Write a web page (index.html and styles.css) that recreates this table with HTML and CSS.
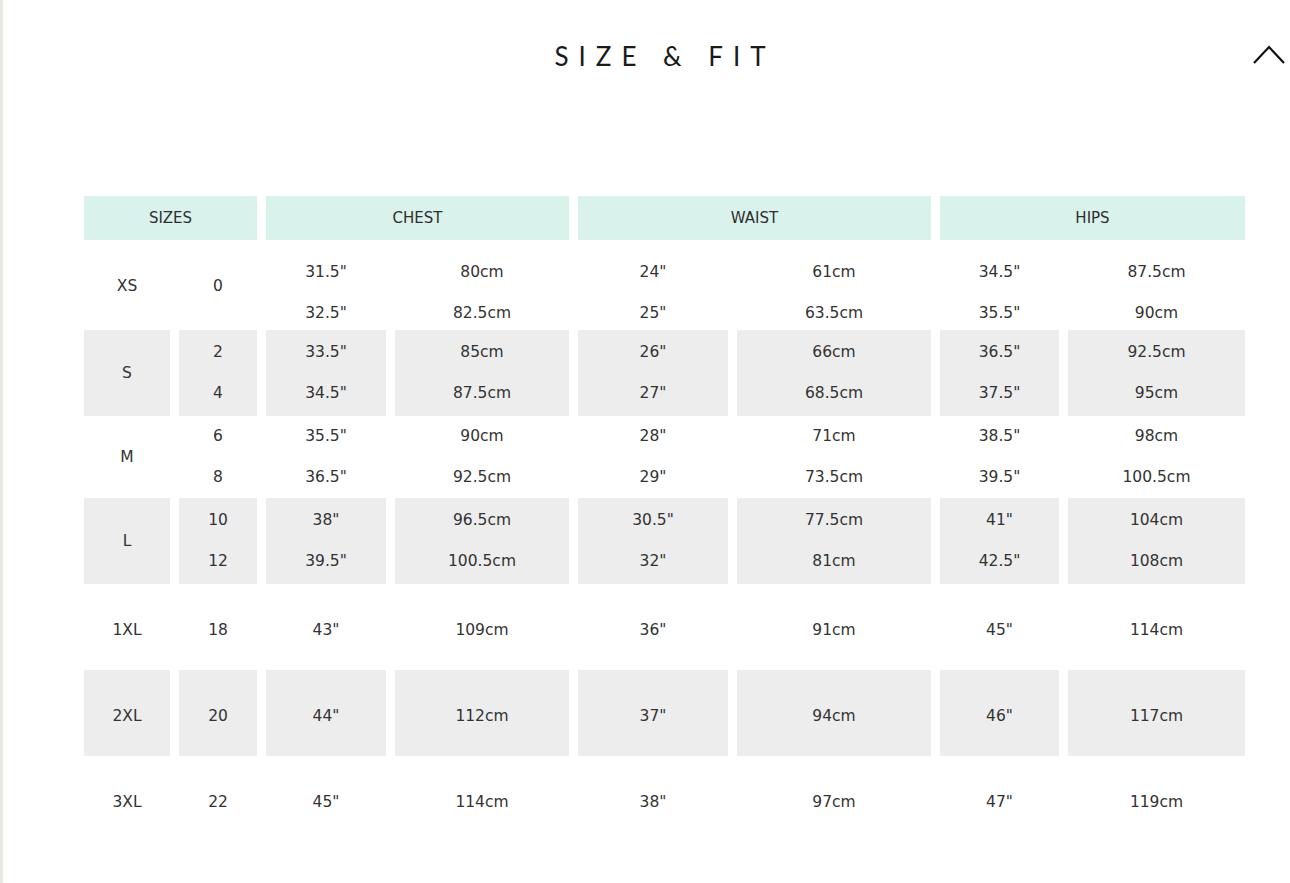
FILE: index.html
```html
<!DOCTYPE html>
<html lang="en">
<head>
<meta charset="utf-8">
<title>Size &amp; Fit</title>
<link rel="stylesheet" href="styles.css">
</head>
<body>
<div class="page">
  <header class="bar">
    <span></span>
    <h1 class="title">SIZE &amp; FIT</h1>
    <svg class="chev" width="35" height="20" viewBox="0 0 35 20" aria-hidden="true"><polyline points="2,18 17,2 32,18" fill="none" stroke="#111" stroke-width="2.2"/></svg>
  </header>

  <div class="chart">
    <div class="row head">
      <div class="hcell span2">SIZES</div>
      <div class="hcell span2">CHEST</div>
      <div class="hcell span2">WAIST</div>
      <div class="hcell span2">HIPS</div>
    </div>

    <div class="row r86 first">
      <div class="cell label">XS</div>
      <div class="cell label">0</div>
      <div class="cell"><span>31.5"</span><span>32.5"</span></div>
      <div class="cell"><span>80cm</span><span>82.5cm</span></div>
      <div class="cell"><span>24"</span><span>25"</span></div>
      <div class="cell"><span>61cm</span><span>63.5cm</span></div>
      <div class="cell"><span>34.5"</span><span>35.5"</span></div>
      <div class="cell"><span>87.5cm</span><span>90cm</span></div>
    </div>

    <div class="row r86 shaded">
      <div class="cell">S</div>
      <div class="cell"><span>2</span><span>4</span></div>
      <div class="cell"><span>33.5"</span><span>34.5"</span></div>
      <div class="cell"><span>85cm</span><span>87.5cm</span></div>
      <div class="cell"><span>26"</span><span>27"</span></div>
      <div class="cell"><span>66cm</span><span>68.5cm</span></div>
      <div class="cell"><span>36.5"</span><span>37.5"</span></div>
      <div class="cell"><span>92.5cm</span><span>95cm</span></div>
    </div>

    <div class="row r82">
      <div class="cell">M</div>
      <div class="cell"><span>6</span><span>8</span></div>
      <div class="cell"><span>35.5"</span><span>36.5"</span></div>
      <div class="cell"><span>90cm</span><span>92.5cm</span></div>
      <div class="cell"><span>28"</span><span>29"</span></div>
      <div class="cell"><span>71cm</span><span>73.5cm</span></div>
      <div class="cell"><span>38.5"</span><span>39.5"</span></div>
      <div class="cell"><span>98cm</span><span>100.5cm</span></div>
    </div>

    <div class="row r86 shaded">
      <div class="cell">L</div>
      <div class="cell"><span>10</span><span>12</span></div>
      <div class="cell"><span>38"</span><span>39.5"</span></div>
      <div class="cell"><span>96.5cm</span><span>100.5cm</span></div>
      <div class="cell"><span>30.5"</span><span>32"</span></div>
      <div class="cell"><span>77.5cm</span><span>81cm</span></div>
      <div class="cell"><span>41"</span><span>42.5"</span></div>
      <div class="cell"><span>104cm</span><span>108cm</span></div>
    </div>

    <div class="row r86 single">
      <div class="cell">1XL</div>
      <div class="cell">18</div>
      <div class="cell">43"</div>
      <div class="cell">109cm</div>
      <div class="cell">36"</div>
      <div class="cell">91cm</div>
      <div class="cell">45"</div>
      <div class="cell">114cm</div>
    </div>

    <div class="row r86 shaded single">
      <div class="cell">2XL</div>
      <div class="cell">20</div>
      <div class="cell">44"</div>
      <div class="cell">112cm</div>
      <div class="cell">37"</div>
      <div class="cell">94cm</div>
      <div class="cell">46"</div>
      <div class="cell">117cm</div>
    </div>

    <div class="row r86 single">
      <div class="cell">3XL</div>
      <div class="cell">22</div>
      <div class="cell">45"</div>
      <div class="cell">114cm</div>
      <div class="cell">38"</div>
      <div class="cell">97cm</div>
      <div class="cell">47"</div>
      <div class="cell">119cm</div>
    </div>
  </div>
</div>
</body>
</html>
```

FILE: styles.css
```css
html, body {
  margin: 0;
  padding: 0;
  background: #ffffff;
}

.page {
  min-height: 883px;
  box-sizing: border-box;
  border-left: 3px solid #e9e9e3;
}

.bar {
  display: grid;
  grid-template-columns: 1fr auto 1fr;
  padding: 41px 3px 0 40px;
}

.title {
  margin: 0;
  font-family: "Lato", "Liberation Sans", sans-serif;
  font-weight: 400;
  font-size: 26px;
  line-height: 30px;
  letter-spacing: 10px;
  color: #1a1a1a;
  white-space: nowrap;
}

.chev {
  justify-self: end;
  align-self: start;
  margin-top: 4px;
  display: block;
}

.chart {
  margin: 125px 0 0 81px;
  font-family: "DejaVu Sans", "Liberation Sans", sans-serif;
  font-size: 15.5px;
  color: #333;
}

.row {
  display: grid;
  grid-template-columns: 86px 78px 120px 174px 150px 194px 119px 177px;
  column-gap: 9px;
}

.head {
  height: 44px;
  margin-bottom: 4px;
}

.hcell {
  background: #d9f3ec;
  display: flex;
  align-items: center;
  justify-content: center;
  font-size: 15px;
  color: #2e2e2e;
}

.span2 {
  grid-column: span 2;
}

.r86 { height: 86px; }
.r82 { height: 82px; }

.cell {
  display: flex;
  flex-direction: column;
  align-items: center;
  justify-content: center;
}

.first .cell {
  padding-top: 8px;
}

.first .label {
  padding-top: 0;
  padding-bottom: 6px;
}

.single .cell {
  padding-top: 6px;
}

.cell span {
  display: block;
  line-height: 41px;
}

.shaded .cell {
  background: #ededed;
}
```
